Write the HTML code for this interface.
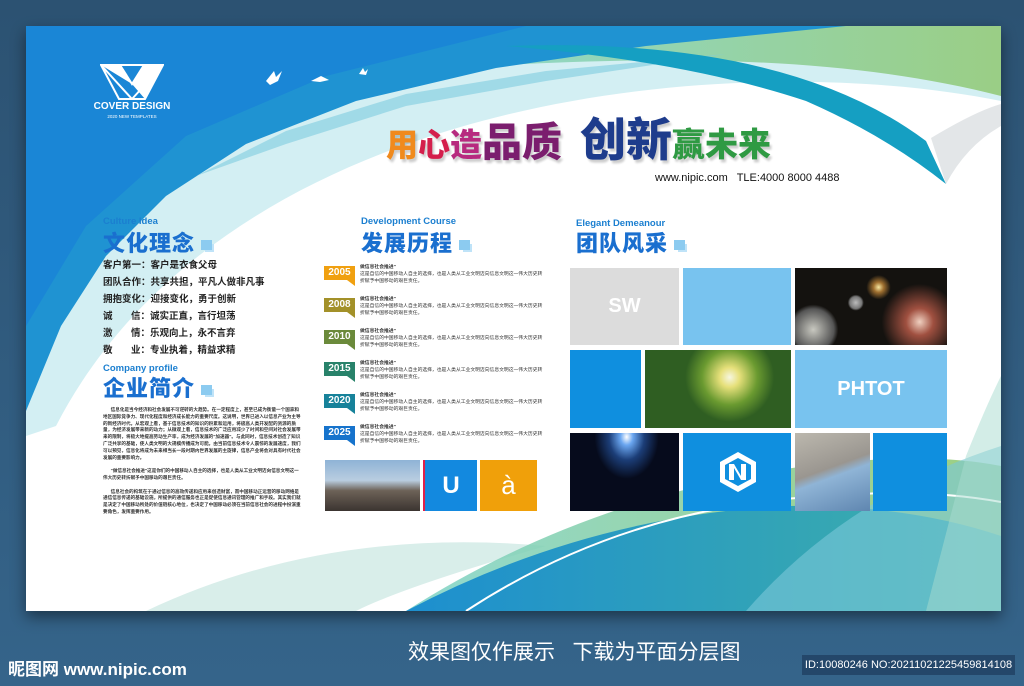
<!DOCTYPE html>
<html><head><meta charset="utf-8"><style>
*{margin:0;padding:0;box-sizing:border-box}
body{width:1024px;height:686px;overflow:hidden;background:linear-gradient(#2c5272,#35648a);font-family:"Liberation Sans","Noto Sans CJK SC",sans-serif;position:relative}
.board{position:absolute;left:26px;top:26px;width:975px;height:585px;background:#fff;overflow:hidden;box-shadow:0 6px 14px rgba(0,0,0,.45)}
.a{position:absolute}
.en{color:#1b7fd0;font-size:9.5px;font-weight:bold}
.h{color:#1a6fcf;font-size:22px;font-weight:900;letter-spacing:1px;white-space:nowrap}
.sq{display:inline-block;width:11px;height:10px;background:#8ccbf0;margin-left:6px;box-shadow:3px 3px 0 -1px #bfe3f8;vertical-align:middle}
.li{font-size:9.5px;font-weight:bold;color:#222;white-space:nowrap}
.tiny{font-size:4.6px;line-height:6.8px;color:#333;font-weight:bold}
.yr{position:absolute;left:324px;width:31px;height:14px;color:#fff;font-size:10px;font-weight:bold;text-align:center;line-height:14px}
.yr:after{content:"";position:absolute;right:0;bottom:-6px;border-left:8px solid transparent;border-top:6px solid;border-top-color:inherit}
.tx{position:absolute;left:360px;font-size:4.8px;line-height:7px;color:#333;width:185px}
.cell{position:absolute}
</style></head><body>
<div class="board">
<svg class="a" style="left:0;top:0" width="975" height="585" viewBox="0 0 975 585">
<defs>
<linearGradient id="gr" x1="0" y1="0" x2="1" y2="0"><stop offset="0" stop-color="#7ed3c8"/><stop offset="1" stop-color="#8cc66a"/></linearGradient>
<linearGradient id="bt" x1="0" y1="0" x2="1" y2="0"><stop offset="0" stop-color="#1d8fcf"/><stop offset="1" stop-color="#3fb0a8"/></linearGradient>
</defs>
<path d="M0,0 H975 V75 C700,20 200,70 30,400 L0,410 Z" fill="#d3eff3"/>
<path d="M380,0 H975 V70 C800,25 600,30 380,45 Z" fill="url(#gr)" opacity=".8"/>
<path d="M0,0 H820 L620,20 L470,42 L330,75 L220,118 L140,170 L80,230 L35,300 L0,385 Z" fill="#1f93d2"/>
<path d="M0,0 H500 L300,50 L160,110 L60,200 L0,300 Z" fill="#1a86d6"/>
<path d="M170,150 L260,105 L380,68 L520,45 L700,28 L520,55 L380,80 L260,118 Z" fill="#7fcbe0" opacity=".6"/>
<path d="M480,20 Q760,10 900,115 L920,158 Q860,110 780,75 Q660,35 480,20Z" fill="#159fc2"/>
<path d="M920,158 Q940,120 975,100 V78 Q950,85 905,112Z" fill="#e3e6e8"/>
<path d="M120,585 Q300,500 520,520 Q380,560 330,585Z" fill="#d9eeea"/>
<path d="M380,585 Q560,470 780,440 Q900,425 975,440 V585Z" fill="url(#gr)" opacity=".85"/>
<path d="M380,585 Q560,490 760,480 Q880,478 975,510 V585Z" fill="url(#bt)"/>
<path d="M720,585 Q820,470 975,420 V585Z" fill="#7cc8d8" opacity=".6"/>
<path d="M440,585 Q600,480 800,470 Q900,462 975,476" stroke="#fff" stroke-width="2" fill="none"/>
<path d="M940,430 Q960,380 975,350 V585 H900Z" fill="#a8dcd0" opacity=".5"/>
<g fill="#fff"><path d="M240,55 l8,-10 l2,6 l6,-6 l-4,10 l-8,4z"/><path d="M285,55 l10,-5 l8,4 l-9,2z"/><path d="M333,48 l4,-6 l2,4 l3,-3 l-2,6z"/></g>
</svg>
<svg class="a" style="left:74px;top:38px" width="64" height="36" viewBox="0 0 64 36"><path d="M1,1 H63 L45,35 H19 Z M1,1 L32,35 M63,1 L32,35 M20,1 L32,20 L44,1" fill="none" stroke="#fff" stroke-width="2"/><path d="M1,1 L20,1 L32,20Z M44,1 L63,1 L45,35 L32,20Z" fill="#fff"/></svg>
<div class="a" style="left:65px;top:75px;color:#fff;font-size:10px;font-weight:bold;width:82px;text-align:center">COVER DESIGN</div>
<div class="a" style="left:65px;top:88px;color:#fff;font-size:4.5px;width:82px;text-align:center">2020 NEW TEMPLATES</div>
<div class="a" style="left:360px;top:78px;white-space:nowrap;font-weight:900;text-shadow:2px 3px 2px rgba(0,0,0,.2)"><span style="font-size:32px;color:#f08a1d">用</span><span style="font-size:32px;color:#d41f4c">心</span><span style="font-size:32px;color:#b72a7f">造</span><span style="font-size:40px;color:#7b1e6e">品质</span><span style="font-size:46px;color:#1e3c8c;margin-left:18px">创新</span><span style="font-size:33px;color:#2f9a43">赢未来</span></div>
<div class="a" style="left:629px;top:146px;font-size:11px;color:#111;white-space:nowrap">www.nipic.com &nbsp; TLE:4000 8000 4488</div>
<div class="a en" style="left:77px;top:190px">Culture Idea</div>
<div class="a h" style="left:77px;top:200px">文化理念<span class="sq"></span></div>
<div class="a li" style="left:77px;top:231px">客户第一：客户是衣食父母</div>
<div class="a li" style="left:77px;top:248px">团队合作：共享共担，平凡人做非凡事</div>
<div class="a li" style="left:77px;top:265px">拥抱变化：迎接变化，勇于创新</div>
<div class="a li" style="left:77px;top:282px">诚&nbsp;&nbsp;&nbsp;&nbsp;&nbsp;&nbsp;&nbsp;信：诚实正直，言行坦荡</div>
<div class="a li" style="left:77px;top:299px">激&nbsp;&nbsp;&nbsp;&nbsp;&nbsp;&nbsp;&nbsp;情：乐观向上，永不言弃</div>
<div class="a li" style="left:77px;top:316px">敬&nbsp;&nbsp;&nbsp;&nbsp;&nbsp;&nbsp;&nbsp;业：专业执着，精益求精</div>
<div class="a en" style="left:77px;top:337px">Company profile</div>
<div class="a h" style="left:77px;top:345px">企业简介<span class="sq"></span></div>
<div class="a tiny" style="left:77px;top:381px;width:200px">&nbsp;&nbsp;&nbsp;&nbsp;&nbsp;&nbsp;信息化是当今经济和社会发展不可逆转的大趋势。在一定程度上，甚至已成为衡量一个国家和地区国际竞争力、现代化程度和经济成长能力的重要尺度。这说明，世界已进入以信息产业为主导的新经济时代。从宏观上看，基于信息技术的知识的积累和运用，将极高人类开发配的资源的质量，为经济发展带来新的动力；从微观上看，信息技术的广泛应用减少了时间和空间对社会发展带来的限制，将极大地提高劳动生产率，成为经济发展的"加速器"。与此同时，信息技术创造了知识广泛共享的基础，使人类文明的大规模传播成为可能。由当前信息技术令人震惊的发展速度，我们可以预见，信息化将成为未来相当长一段时期内世界发展的主旋律，信息产业将会对具有时代社会发展的重要影响力。<br><br>&nbsp;&nbsp;&nbsp;&nbsp;&nbsp;&nbsp;"做信息社会推进"这是你们的中国移动人自主的选择，也是人类从工业文明迈向信息文明这一伟大历史转折赋予中国移动的艰巨责任。<br><br>&nbsp;&nbsp;&nbsp;&nbsp;&nbsp;&nbsp;信息社会的构筑在于通过信息的高效传递和应用来创造财富，而中国移动正运营的移动网络是通信信息传递的基础设施，所提供的通信服务也正是促使信息通讯管理的推广和手段。其实我们就是决定了中国移动所处的价值链核心地位，也决定了中国移动必须在当前信息社会的进程中扮演重要角色，发挥重要作用。</div>
<div class="a en" style="left:335px;top:190px">Development Course</div>
<div class="a h" style="left:335px;top:200px">发展历程<span class="sq"></span></div>
<div class="yr" style="left:298px;top:240px;background:#f0a010;border-top-color:#f0a010">2005</div>
<div class="yr" style="left:298px;top:272px;background:#a39129;border-top-color:#a39129">2008</div>
<div class="yr" style="left:298px;top:304px;background:#6b8a3b;border-top-color:#6b8a3b">2010</div>
<div class="yr" style="left:298px;top:336px;background:#28826a;border-top-color:#28826a">2015</div>
<div class="yr" style="left:298px;top:368px;background:#17829a;border-top-color:#17829a">2020</div>
<div class="yr" style="left:298px;top:400px;background:#1673cc;border-top-color:#1673cc">2025</div>
<div class="tx" style="left:334px;top:238px"><b>做信息社会推进"</b><br>这是自信的中国移动人自主的选择，也是人类从工业文明迈向信息文明这一伟大历史转折赋予中国移动的艰巨责任。</div>
<div class="tx" style="left:334px;top:270px"><b>做信息社会推进"</b><br>这是自信的中国移动人自主的选择，也是人类从工业文明迈向信息文明这一伟大历史转折赋予中国移动的艰巨责任。</div>
<div class="tx" style="left:334px;top:302px"><b>做信息社会推进"</b><br>这是自信的中国移动人自主的选择，也是人类从工业文明迈向信息文明这一伟大历史转折赋予中国移动的艰巨责任。</div>
<div class="tx" style="left:334px;top:334px"><b>做信息社会推进"</b><br>这是自信的中国移动人自主的选择，也是人类从工业文明迈向信息文明这一伟大历史转折赋予中国移动的艰巨责任。</div>
<div class="tx" style="left:334px;top:366px"><b>做信息社会推进"</b><br>这是自信的中国移动人自主的选择，也是人类从工业文明迈向信息文明这一伟大历史转折赋予中国移动的艰巨责任。</div>
<div class="tx" style="left:334px;top:398px"><b>做信息社会推进"</b><br>这是自信的中国移动人自主的选择，也是人类从工业文明迈向信息文明这一伟大历史转折赋予中国移动的艰巨责任。</div>
<div class="cell" style="left:299px;top:434px;width:95px;height:51px;background:linear-gradient(#8fb3d6 0%,#b9cde0 40%,#6d6258 60%,#3b3430 100%)"></div>
<div class="cell" style="left:397px;top:434px;width:54px;height:51px;background:#1389df;border-left:2px solid #e0204a;color:#fff;font-size:24px;font-weight:bold;text-align:center;line-height:51px">U</div>
<div class="cell" style="left:454px;top:434px;width:57px;height:51px;background:#f0a00a;color:#fff;font-size:26px;text-align:center;line-height:51px">à</div>
<div class="a en" style="left:550px;top:192px">Elegant Demeanour</div>
<div class="a h" style="left:550px;top:200px">团队风采<span class="sq"></span></div>
<div class="cell" style="left:544px;top:242px;width:109px;height:77px;background:#dcdcdc;color:#fff;font-size:20px;font-weight:bold;text-align:center;line-height:77px">SW</div>
<div class="cell" style="left:657px;top:242px;width:108px;height:77px;background:#78c3ef"></div>
<div class="cell" style="left:769px;top:242px;width:152px;height:77px;background:radial-gradient(circle at 55% 25%,#f6e6a0 0,#a07030 5%,transparent 12%),radial-gradient(circle at 82% 70%,#f0d0c0 0,#a05040 10%,transparent 28%),radial-gradient(circle at 40% 45%,#bbb 0,#777 6%,transparent 8%),radial-gradient(circle at 12% 80%,#c8c8c0 0,#555 14%,transparent 17%),#14120f"></div>
<div class="cell" style="left:544px;top:324px;width:71px;height:78px;background:#0f8fdf"></div>
<div class="cell" style="left:619px;top:324px;width:146px;height:78px;background:radial-gradient(circle at 58% 35%,#f6f6e0 0,#e6e07a 10%,#6a9a30 28%,transparent 45%),#2f5e22"></div>
<div class="cell" style="left:769px;top:324px;width:152px;height:78px;background:#78c3ef;color:#fff;font-size:20px;font-weight:bold;text-align:center;line-height:78px">PHTOT</div>
<div class="cell" style="left:544px;top:407px;width:109px;height:78px;background:radial-gradient(ellipse at 52% 5%,#fff 0,#6aa6f0 8%,#1c3e78 22%,transparent 40%),#060b1c"></div>
<div class="cell" style="left:657px;top:407px;width:108px;height:78px;background:#0f8fdf"><svg style="position:absolute;left:34px;top:17px" width="42" height="44" viewBox="0 0 42 44"><path d="M21,2 L39,12 V32 L21,42 L3,32 V12Z" fill="#fff"/><path d="M21,8 L34,15 V29 L21,36 L8,29 V15Z" fill="#0f8fdf"/><path d="M12,30 V14 H17 L24,26 V14 H29 V30 H24 L17,18 V30Z" fill="#fff"/></svg></div>
<div class="cell" style="left:769px;top:407px;width:75px;height:78px;background:linear-gradient(160deg,#bcb8ae 0,#9a9690 45%,#8fb4d6 55%,#5f86b0 100%)"></div>
<div class="cell" style="left:847px;top:407px;width:74px;height:78px;background:#0f8fdf"></div>
</div>
<div class="a" style="left:408px;top:636px;color:#fff;font-size:21px;white-space:nowrap">效果图仅作展示 &nbsp; 下载为平面分层图</div>
<div class="a" style="left:8px;top:655px;color:#fff;font-size:17px;font-weight:bold;white-space:nowrap">昵图网 www.nipic.com</div>
<div class="a" style="left:802px;top:655px;width:213px;height:20px;background:#24476a;color:#fff;font-size:11px;line-height:20px;text-align:center">ID:10080246 NO:20211021225459814108</div>
</body></html>
